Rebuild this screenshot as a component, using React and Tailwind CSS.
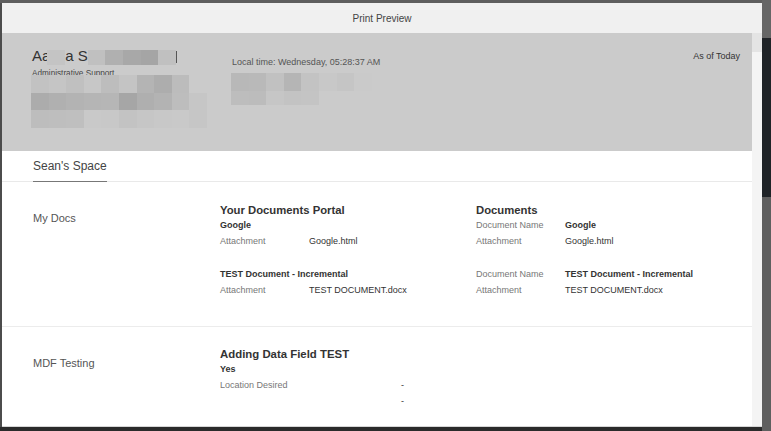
import React from 'react';

const font = { fontFamily: '"Liberation Sans", Arial, sans-serif' };

// pixelated redaction blocks, one array per row
const nameBlocks = ['#c0c0c0', '#b0b0b0', '#a8a8a8', '#a5a5a5', '#c0c0c0'];
const leftBlur = [
  ['#c2c2c2', '#c5c5c5', '#c0c0c0', '#c7c7c7', '#bdbdbd', '#c4c4c4', '#b4b4b4', '#adadad', '#bcbcbc'],
  ['#acacac', '#b0b0b0', '#b3b3b3', '#b5b5b5', '#b6b6b6', '#a6a6a6', '#afafaf', '#b3b3b3', '#bdbdbd', '#c6c6c6'],
  ['#bdbdbd', '#bebebe', '#bfbfbf', '#c9c9c9', '#c8c8c8', '#c3c3c3', '#c6c6c6', '#c8c8c8', '#c9c9c9', '#c6c6c6'],
];
const rightBlur = [
  ['#b8b8b8', '#b9b9b9', '#c1c1c1', '#b5b5b5', '#c3c3c3', '#c8c8c8', '#c5c5c5', '#cacaca'],
  ['#bdbdbd', '#bcbcbc', '#c6c6c6', '#c3c3c3', '#c4c4c4'],
];

const BlurRow = ({ colors, h }) => (
  <div className="flex">
    {colors.map((c, i) => (
      <div key={i} className="w-[17.6px] shrink-0" style={{ backgroundColor: c, height: h }} />
    ))}
  </div>
);

const Field = ({ label, value, labelW = 'w-[89px]', bold = false }) => (
  <div className="mt-[1px] flex h-[15px] items-center text-[9px]">
    <span className={`${labelW} shrink-0 text-[#777]`}>{label}</span>
    <span className={bold ? 'font-bold text-[#333]' : 'text-[#333]'}>{value}</span>
  </div>
);

const Heading = ({ children }) => (
  <div className="flex h-[15px] items-center text-[11.3px] font-bold text-[#333]">{children}</div>
);

const SubTitle = ({ children, className = '' }) => (
  <div className={`flex h-[15px] items-center text-[9px] font-bold text-[#333] ${className}`}>{children}</div>
);

export default function App() {
  return (
    <div className="flex h-[431px] w-[771px] overflow-hidden bg-[#5a5a5a]" style={font}>
      <div className="flex w-[762px] flex-col">
        {/* dimmed page behind the dialog */}
        <div className="h-[3px] bg-[#5e5e5e]" />
        <div className="flex">
          <div className="w-[2px] bg-[#4c4c4c]" />
          {/* Dialog */}
          <div className="flex h-[424px] w-[760px] flex-col border-b border-[#d6d6d6] bg-white">
            <div className="flex h-[30px] shrink-0 items-center justify-center bg-[#f0f0f0] text-[10px] text-[#444]">
              Print Preview
            </div>

            <div className="flex min-h-0 flex-1">
              <div className="w-[750px] overflow-hidden">
                {/* Profile header band */}
                <div className="flex h-[118px] bg-[#cbcbcb] pl-[30px] pr-[12px]">
                  <div className="w-[200px] pt-[15px]">
                    <div className="flex h-[16px] items-start text-[15px] leading-[16px] text-[#333]">
                      <span>Aa</span>
                      <div className="-ml-[3px] mt-[2px] h-[15px] w-[18px] bg-[#c4c4c4]" />
                      <span>a S</span>
                      <div className="mt-[2px] flex">
                        {nameBlocks.map((c, i) => (
                          <div key={i} className="h-[15px] w-[17.6px]" style={{ backgroundColor: c }} />
                        ))}
                      </div>
                      <div className="mt-[3px] h-[12px] w-[1px] bg-[#555]" />
                    </div>
                    <div className="mt-[5px] flex h-[10px] items-center text-[8.2px] text-[#444]">
                      Administrative Support
                    </div>
                    <div className="-mt-[4px] ml-[-1px]">
                      <BlurRow colors={leftBlur[0]} h="18px" />
                      <BlurRow colors={leftBlur[1]} h="17px" />
                      <BlurRow colors={leftBlur[2]} h="18px" />
                    </div>
                  </div>

                  <div className="pt-[24px]">
                    <div className="flex h-[12px] items-center text-[9px] text-[#555]">
                      Local time: Wednesday, 05:28:37 AM
                    </div>
                    <div className="mt-[4px] ml-[-1px]">
                      <BlurRow colors={rightBlur[0]} h="18px" />
                      <BlurRow colors={rightBlur[1]} h="14px" />
                    </div>
                  </div>

                  <div className="ml-auto pt-[18px]">
                    <div className="flex h-[12px] items-center text-[9px] text-[#333]">As of Today</div>
                  </div>
                </div>

                {/* Tabs */}
                <div className="flex h-[31px] border-b border-[#e9e9e9] pl-[31px]">
                  <div className="-mb-[1px] flex items-center border-b border-[#777] text-[12px] text-[#444]">
                    Sean's Space
                  </div>
                </div>

                {/* My Docs */}
                <div className="flex border-b border-[#ececec] pb-[28px] pl-[31px] pt-[21px]">
                  <div className="w-[187px] shrink-0 pt-[7px] text-[11px] leading-[16px] text-[#555]">My Docs</div>
                  <div className="w-[256px] shrink-0">
                    <Heading>Your Documents Portal</Heading>
                    <SubTitle>Google</SubTitle>
                    <Field label="Attachment" value="Google.html" />
                    <SubTitle className="mt-[18px]">TEST Document - Incremental</SubTitle>
                    <Field label="Attachment" value="TEST DOCUMENT.docx" />
                  </div>
                  <div className="flex-1">
                    <Heading>Documents</Heading>
                    <div className="flex h-[15px] items-center text-[9px]">
                      <span className="w-[89px] shrink-0 text-[#777]">Document Name</span>
                      <span className="font-bold text-[#333]">Google</span>
                    </div>
                    <Field label="Attachment" value="Google.html" />
                    <div className="mt-[18px] flex h-[15px] items-center text-[9px]">
                      <span className="w-[89px] shrink-0 text-[#777]">Document Name</span>
                      <span className="font-bold text-[#333]">TEST Document - Incremental</span>
                    </div>
                    <Field label="Attachment" value="TEST DOCUMENT.docx" />
                  </div>
                </div>

                {/* MDF Testing */}
                <div className="flex pb-[28px] pl-[31px] pt-[20px]">
                  <div className="w-[187px] shrink-0 pt-[8px] text-[11px] leading-[16px] text-[#555]">MDF Testing</div>
                  <div className="w-[300px] shrink-0">
                    <div className="flex h-[15px] items-center text-[11.4px] font-bold text-[#333]">Adding Data Field TEST</div>
                    <SubTitle>Yes</SubTitle>
                    <Field label="Location Desired" value="-" labelW="w-[181px]" />
                    <Field label="" value="-" labelW="w-[181px]" />
                  </div>
                </div>
              </div>

              {/* scrollbar */}
              <div className="flex w-[10px] flex-col bg-[#f4f4f4]">
                <div className="h-[19px] bg-[#e4e4e4]" />
              </div>
            </div>
          </div>
        </div>
        <div className="flex-1 bg-[#2b2b2b]" />
      </div>

      {/* page edge on the right */}
      <div className="flex w-[9px] flex-col">
        <div className="h-[38px] bg-[#666]" />
        <div className="h-[159px] bg-[#1f2327]" />
        <div className="flex-1 bg-[#5f5f5f]" />
      </div>
    </div>
  );
}
